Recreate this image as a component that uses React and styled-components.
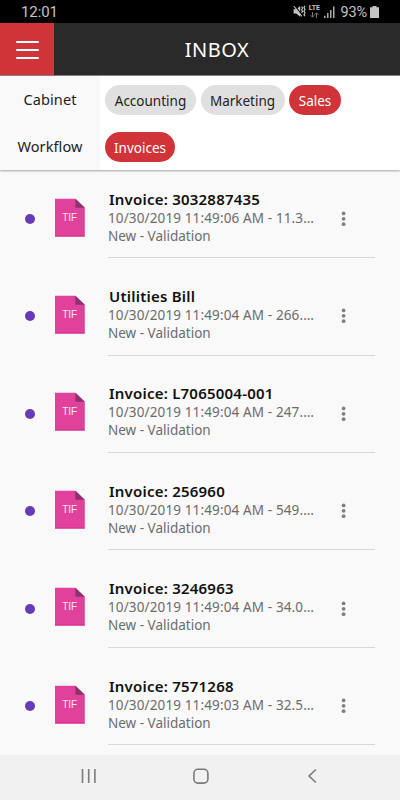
import React from 'react';
import styled, { createGlobalStyle } from 'styled-components';

const documents = [
  { title: 'Invoice: 3032887435', info: '10/30/2019 11:49:06 AM - 11.3…' },
  { title: 'Utilities Bill', info: '10/30/2019 11:49:04 AM - 266.…' },
  { title: 'Invoice: L7065004-001', info: '10/30/2019 11:49:04 AM - 247.…' },
  { title: 'Invoice: 256960', info: '10/30/2019 11:49:04 AM - 549.…' },
  { title: 'Invoice: 3246963', info: '10/30/2019 11:49:04 AM - 34.0…' },
  { title: 'Invoice: 7571268', info: '10/30/2019 11:49:03 AM - 32.5…' },
];

const StatusBar = () => (
  <Status>
    <Clock>12:01</Clock>
    <StatusIcons>
      <svg width="14" height="13" viewBox="0 0 14 13">
        <path d="M1.6 4.2h2.6L8.2 1v10.8L4.2 8.6H1.6z" fill="#c4c4c4" />
        <path d="M2.6 0.4l8 10.4" stroke="#000" strokeWidth="1.2" />
        <path d="M1.8 1l8 10.4" stroke="#c4c4c4" strokeWidth="1.1" />
        <path d="M9.6 1.6l1 1.5-1 1.6 1 1.6-1 1.6M13 0.8l-1 1.8 1 1.8-1 1.8 1 1.8-1 1.8 1 1.4" stroke="#c4c4c4" strokeWidth="1.2" fill="none" />
      </svg>
      <Lte>
        LTE
        <svg width="9" height="6" viewBox="0 0 9 6">
          <path d="M2.5 0v5M0.7 3.2l1.8 2 1.8-2M6.5 6V1M4.7 2.8l1.8-2 1.8 2" stroke="#777" fill="none" />
        </svg>
      </Lte>
      <svg width="11" height="12" viewBox="0 0 11 12">
        <path d="M0.8 9.8V12M3.8 7v5M6.8 4v8M9.8 0.5V12" stroke="#c4c4c4" strokeWidth="1.3" />
      </svg>
      <Percent>93%</Percent>
      <svg width="9" height="12" viewBox="0 0 9 12">
        <path d="M2.5 0h4v1.3H9V12H0V1.3h2.5z" fill="#c4c4c4" />
      </svg>
    </StatusIcons>
  </Status>
);

const FileIcon = () => (
  <FileSvg width="30" height="39" viewBox="0 0 30 39">
    <path d="M0 .8h20.4l9.4 9V38.4H0z" fill="#df419b" />
    <path d="M20.4.8l9.4 9h-9.4z" fill="#8f326b" />
    <path d="M0 38.1h29.8" stroke="#d51f87" strokeWidth=".8" />
    <text x="14.7" y="23" textAnchor="middle" fontSize="10" fill="#fdeaf4">TIF</text>
  </FileSvg>
);

const DocumentRow = ({ title, info }) => (
  <Row>
    <Dot />
    <FileIcon />
    <Details>
      <Texts>
        <Title>{title}</Title>
        <Info>{info}</Info>
        <Info $state>New - Validation</Info>
      </Texts>
      <MoreButton aria-label="More">
        <svg width="6" height="16" viewBox="0 0 6 16">
          <circle cx="2.6" cy="2.4" r="1.9" />
          <circle cx="2.6" cy="7.8" r="1.9" />
          <circle cx="2.6" cy="13.2" r="1.9" />
        </svg>
      </MoreButton>
    </Details>
  </Row>
);

export default function App() {
  return (
    <Screen>
      <GlobalStyle />
      <StatusBar />
      <Header>
        <MenuButton aria-label="Menu">
          <MenuLine />
          <MenuLine />
          <MenuLine />
        </MenuButton>
        <HeaderTitle>INBOX</HeaderTitle>
      </Header>
      <Filters>
        <FilterRow>
          <FilterLabel>Cabinet</FilterLabel>
          <Chips>
            <Chip $width="91px">Accounting</Chip>
            <Chip $width="84px">Marketing</Chip>
            <Chip $width="52px" $active>Sales</Chip>
          </Chips>
        </FilterRow>
        <FilterRow>
          <FilterLabel>Workflow</FilterLabel>
          <Chips>
            <Chip $width="70px" $active>Invoices</Chip>
          </Chips>
        </FilterRow>
      </Filters>
      <List>
        {documents.map((doc) => (
          <DocumentRow key={doc.title} title={doc.title} info={doc.info} />
        ))}
      </List>
      <NavBar>
        <svg width="16" height="16" viewBox="0 0 16 16">
          <path d="M1.5 1v14M7.7 1v14M13.9 1v14" />
        </svg>
        <svg width="18" height="17" viewBox="0 0 18 17">
          <rect x="0.9" y="1.3" width="14" height="13.8" rx="4" />
        </svg>
        <svg width="10" height="16" viewBox="0 0 10 16">
          <path d="M8.8 1.5L2.1 8l6.7 6.5" />
        </svg>
      </NavBar>
    </Screen>
  );
}

const GlobalStyle = createGlobalStyle`
  * {
    box-sizing: border-box;
  }
  body {
    margin: 0;
    font-family: 'Noto Sans', 'Open Sans', sans-serif;
  }
  button {
    margin: 0;
    padding: 0;
    border: none;
    font: inherit;
  }
`;
const Screen = styled.div`
  display: flex;
  flex-direction: column;
  width: 400px;
  height: 800px;
  overflow: hidden;
  background: #f9f9f9;
`;
const Status = styled.div`
  display: flex;
  flex-shrink: 0;
  justify-content: space-between;
  height: 23px;
  padding: 0 21px 0 21px;
  background: #000;
  color: #c4c4c4;
  font-family: Roboto, sans-serif;
`;
const Clock = styled.span`
  font-size: 15px;
  line-height: 24px;
  letter-spacing: -0.1px;
`;
const StatusIcons = styled.div`
  display: flex;
  align-items: center;
`;
const Lte = styled.div`
  display: flex;
  flex-direction: column;
  align-items: center;
  width: 12px;
  margin: 0 4px 0 2px;
  font-size: 7px;
  font-weight: 700;
  line-height: 7px;
`;
const Percent = styled.span`
  margin: 1px 3px 0 5px;
  font-size: 14.5px;
  letter-spacing: -0.1px;
`;
const Header = styled.header`
  display: flex;
  flex-shrink: 0;
  height: 53px;
  border-bottom: 1px solid #858585;
  background: #2a2a2a;
`;
const MenuButton = styled.button`
  display: flex;
  flex-direction: column;
  align-items: center;
  justify-content: center;
  gap: 5.6px;
  width: 54px;
  padding-top: 2px;
  background: #d13438;
`;
const MenuLine = styled.span`
  width: 23px;
  height: 2px;
  border-radius: 1px;
  background: #fff;
`;
const HeaderTitle = styled.h1`
  flex: 1;
  margin: 0;
  padding: 1px 20px 0 0;
  color: #fff;
  font-size: 20px;
  font-weight: 400;
  line-height: 52px;
  letter-spacing: 0.5px;
  text-align: center;
`;
const Filters = styled.div`
  flex-shrink: 0;
  height: 94px;
  background: #fff;
  box-shadow: 0 1px 2px rgba(0, 0, 0, 0.35);
`;
const FilterRow = styled.div`
  display: flex;
  height: 47px;
`;
const FilterLabel = styled.div`
  width: 100px;
  background: #f9f9f9;
  color: #222;
  font-size: 14.5px;
  line-height: 47px;
  letter-spacing: 0.1px;
  text-align: center;
`;
const Chips = styled.div`
  display: flex;
  align-items: center;
  gap: 4.5px;
  padding-left: 5px;
`;
const Chip = styled.button`
  width: ${({ $width }) => $width};
  height: 30px;
  padding-top: 2px;
  border-radius: 15px;
  background: ${({ $active }) => ($active ? '#d13438' : '#e0e0e0')};
  color: ${({ $active }) => ($active ? '#fff' : '#222')};
  font-size: 13.5px;
  line-height: 28px;
`;
const List = styled.main`
  display: flex;
  flex: 1;
  flex-direction: column;
  gap: 11.4px;
  padding-top: 2.3px;
`;
const Row = styled.div`
  display: flex;
  flex-shrink: 0;
  height: 86px;
  padding: 0 25px;
`;
const Dot = styled.span`
  width: 10px;
  height: 10px;
  margin-top: 41.7px;
  border-radius: 50%;
  background: #673ab7;
`;
const FileSvg = styled.svg`
  margin: 25.3px 0 0 20px;
  font-family: 'Liberation Sans', sans-serif;
`;
const Details = styled.div`
  display: flex;
  flex: 1;
  margin-left: 23px;
  border-bottom: 1px solid #d9d9d9;
`;
const Texts = styled.div`
  width: 228px;
  padding-top: 16.4px;
  white-space: nowrap;
`;
const Title = styled.div`
  padding-left: 1px;
  color: #111;
  font-size: 15px;
  font-weight: 600;
  line-height: 20px;
  letter-spacing: 0.22px;
`;
const Info = styled.div`
  color: #6c6c6c;
  font-size: 13.5px;
  line-height: ${({ $state }) => ($state ? '17px' : '19px')};
  letter-spacing: ${({ $state }) => ($state ? '0' : '0.13px')};
`;
const MoreButton = styled.button`
  display: flex;
  width: 15px;
  height: 16px;
  margin-top: 38.7px;
  justify-content: center;
  background: none;
  fill: #808080;
`;
const NavBar = styled.nav`
  display: flex;
  flex-shrink: 0;
  align-items: center;
  justify-content: space-between;
  height: 45px;
  padding: 0 83px 3px 81px;
  background: #f1f1f1;

  svg {
    fill: none;
    stroke: #7b7b7b;
    stroke-width: 1.6;
  }
`;
